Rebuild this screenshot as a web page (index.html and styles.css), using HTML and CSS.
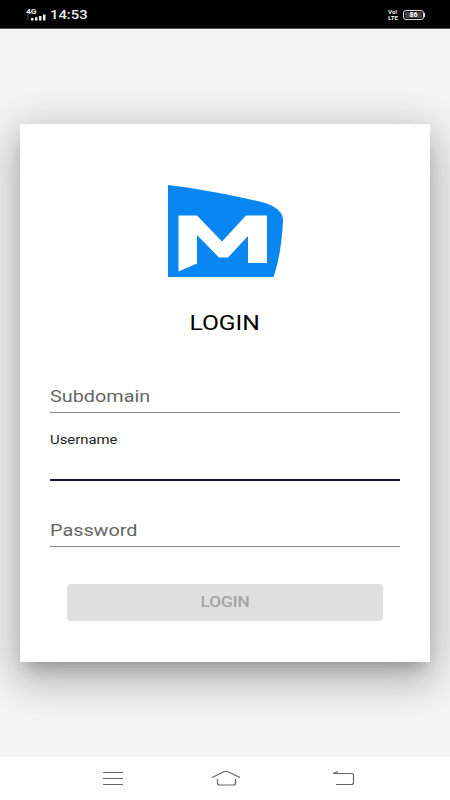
FILE: index.html
```html
<!DOCTYPE html>
<html lang="en">
<head>
    <meta charset="UTF-8">
    <title>Login</title>
    <link rel="stylesheet" href="styles.css">
</head>
<body>
    <div class="status">
        <div class="status_left">
            <div class="network">
                <span class="network_type">4G</span>
                <svg class="signal" width="20" height="7" viewBox="0 0 20 7">
                    <path d="M1 1h2M2 1v5" stroke="#444" fill="none"/>
                    <path d="M5 4h2.500v2.500H5zM9 3.300h2.500v3.200H9zM13 2h2.500v4.500H13zM17 .5h2.500v6H17z" fill="#eee"/>
                </svg>
            </div>
            <span class="time">14:53</span>
        </div>
        <div class="status_right">
            <div class="volte"><span>Vo!</span><span>LTE</span></div>
            <div class="battery">86</div>
            <div class="battery_tip"></div>
        </div>
    </div>
    <div class="content">
        <form class="card">
            <svg class="logo" width="118" height="94" viewBox="0 0 118 94">
                <path d="M2 1C35 5 72 12 99 19Q118 25 117 38Q115 72 107.500 93H2z" fill="#0887f2"/>
                <path d="M12.500 31.500H31L56 57.500L80 31.500H101V79H82V52L62 73.500H53L31 51V79.500L12.500 87.500z" fill="#fff"/>
            </svg>
            <h1><span>LOGIN</span></h1>
            <div class="field subdomain"><label>Subdomain</label></div>
            <div class="field username"><label>Username</label></div>
            <div class="field password"><label>Password</label></div>
            <button type="button" disabled><span>LOGIN</span></button>
        </form>
    </div>
    <div class="nav">
        <svg width="22" height="16" viewBox="0 0 22 16"><path d="M1 2.500H21M1 8.500H21M1 14.500H21"/></svg>
        <svg width="30" height="16" viewBox="0 0 30 16"><path d="M1 7.500L13 1.800Q15 .7 17 1.800L29 7.500M6.500 9V13Q6.500 15 8.500 15H22.500Q24.500 15 24.500 13V9"/></svg>
        <svg width="24" height="16" viewBox="0 0 24 16"><path d="M7 1.500L2 3.500H20.500Q22.500 3.500 22.500 5.500V12.500Q22.500 14.500 20.500 14.500H5"/></svg>
    </div>
</body>
</html>
```
FILE: styles.css
```css
* {
    box-sizing: border-box;
}
body {
    display: flex;
    flex-direction: column;
    height: 800px;
    margin: 0;
    background: #f4f4f4;
    font-family: Roboto, "Liberation Sans", sans-serif;
}
.status {
    display: flex;
    justify-content: space-between;
    align-items: center;
    height: 29px;
    padding: 2px 25px 0 26px;
    border-bottom: 1px solid #555;
    background: #000;
    color: #eee;
}
.status_left, .status_right {
    display: flex;
    align-items: center;
}
.network {
    display: flex;
    flex-direction: column;
    width: 24px;
}
.network_type {
    font-size: 7px;
    line-height: 6px;
    font-weight: 700;
    transform: scaleX(1.2);
    transform-origin: left;
}
.signal {
    margin-top: -1px;
}
.time {
    font-size: 13px;
    font-weight: 500;
    line-height: 16px;
    transform: scaleX(1.14);
    transform-origin: left;
}
.volte {
    display: flex;
    flex-direction: column;
    width: 15px;
    font-size: 5px;
    line-height: 6px;
    font-weight: 700;
}
.volte span {
    height: 6px;
    transform: scaleX(1.25);
    transform-origin: left;
}
.battery {
    width: 21px;
    height: 10px;
    border: 1px solid #ddd;
    border-radius: 3px;
    background: #444;
    box-shadow: inset 0 0 0 1px #000;
    color: #fff;
    font-size: 7px;
    line-height: 8px;
    font-weight: 700;
    text-align: center;
}
.battery_tip {
    width: 1px;
    height: 4px;
    background: #ddd;
}
.content {
    flex: 1;
    padding: 95px 20px 0;
}
.card {
    display: flex;
    flex-direction: column;
    height: 538px;
    padding: 60px 30px 0;
    background: #fff;
    box-shadow: 0 11px 15px -7px rgba(0, 0, 0, .22), 0 20px 38px 3px rgba(0, 0, 0, .15), 0 7px 40px 6px rgba(0, 0, 0, .16);
}
.logo {
    margin-left: 116px;
}
h1 {
    margin: 33px 0 0;
    font-size: 20px;
    font-weight: 400;
    line-height: 24px;
    text-align: center;
}
h1 span, button span {
    display: inline-block;
    transform: scaleX(1.23);
}
.field {
    border-bottom: 1px solid #858585;
    color: #666;
    font-size: 17px;
    line-height: 20px;
}
.field label {
    display: inline-block;
    transform: scaleX(1.165);
    transform-origin: left;
}
.subdomain {
    height: 37px;
    margin-top: 41px;
    padding-top: 10px;
}
.username {
    height: 60px;
    margin-top: 8px;
    padding-top: 9px;
    border-bottom: 2px solid #15102e;
    color: #222;
    font-size: 12.5px;
}
.username label {
    transform: scaleX(1.19);
}
.password {
    height: 36px;
    margin-top: 30px;
    padding-top: 9px;
}
button {
    height: 37px;
    margin: 37px 17px 0;
    padding: 0 0 2px;
    border: 0;
    border-radius: 4px;
    background: #dfdfdf;
    color: #a4a4a4;
    font-family: inherit;
    font-size: 14px;
    font-weight: 500;
}
.nav {
    display: flex;
    justify-content: space-between;
    align-items: center;
    height: 43px;
    padding: 0 95px 2px 102px;
    background: #fff;
}
.nav svg {
    fill: none;
    stroke: #666;
    stroke-width: 1.2;
}
.nav svg:nth-child(2) {
    margin: 0 2px 0 -2px;
}
```
